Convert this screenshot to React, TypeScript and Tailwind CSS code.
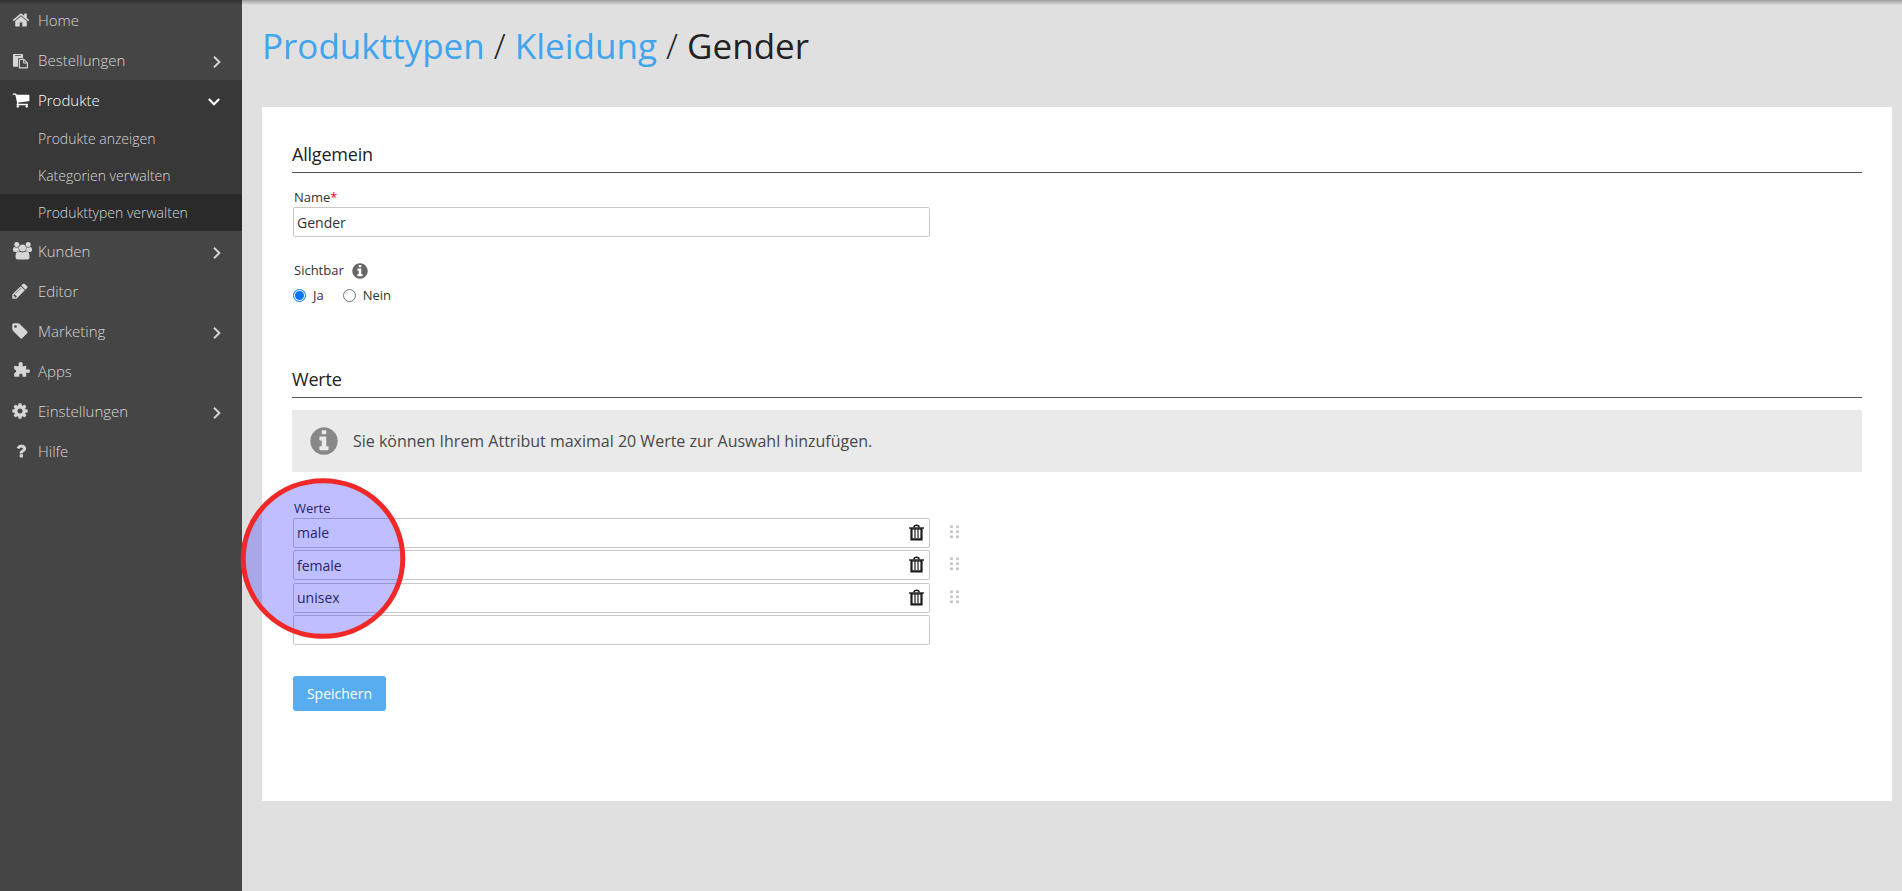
import type { ReactNode } from 'react';

const PATHS = {
  home: 'M1472 992v480q0 26-19 45t-45 19h-384v-384h-256v384h-384q-26 0-45-19t-19-45v-480q0-1 .5-3t.5-3l575-474 575 474q1 2 1 6zm223-69l-62 74q-8 9-21 11h-3q-13 0-21-7l-692-577-692 577q-12 8-24 7-13-2-21-11l-62-74q-8-10-7-23.5t11-21.5l719-599q32-26 76-26t76 26l244 204v-195q0-14 9-23t23-9h192q14 0 23 9t9 23v408l219 182q10 8 11 21.5t-7 23.5z',
  cart: 'M704 1536q0 52-38 90t-90 38-90-38-38-90 38-90 90-38 90 38 38 90zm896 0q0 52-38 90t-90 38-90-38-38-90 38-90 90-38 90 38 38 90zm128-1088v512q0 24-16.5 42.5t-40.5 21.5l-1044 122q13 60 13 70 0 16-24 64h920q26 0 45 19t19 45-19 45-45 19h-1024q-26 0-45-19t-19-45q0-11 8-31.5t16-36 21.5-40 15.5-29.5l-177-823h-204q-26 0-45-19t-19-45 19-45 45-19h256q16 0 28.5 6.5t19.5 15.5 13 24.5 8 26 5.5 29.5 4.5 26h1201q26 0 45 19t19 45z',
  pencil: 'M491 1536l91-91-235-235-91 91v107h128v128h107zm523-928q0-22-22-22-10 0-17 7l-542 542q-7 7-7 17 0 22 22 22 10 0 17-7l542-542q7-7 7-17zm-54-192l416 416-832 832h-416v-416zm683 96q0 53-37 90l-166 166-416-416 166-165q36-38 90-38 53 0 91 38l235 234q37 39 37 91z',
  tag: 'M576 448q0-53-37.5-90.5t-90.5-37.5-90.5 37.5-37.5 90.5 37.5 90.5 90.5 37.5 90.5-37.5 37.5-90.5zm1067 576q0 53-37 90l-491 492q-39 37-91 37-53 0-90-37l-715-716q-38-37-64.5-101t-26.5-117v-416q0-52 38-90t90-38h416q53 0 117 26.5t102 64.5l715 714q37 39 37 91z',
  cog: 'M1152 896q0-106-75-181t-181-75-181 75-75 181 75 181 181 75 181-75 75-181zm512-109v222q0 12-8 23t-20 13l-185 28q-19 54-39 91 35 50 107 138 10 12 10 25t-9 23q-27 37-99 108t-94 71q-12 0-26-9l-138-108q-44 23-91 38-16 136-29 186-7 28-36 28h-222q-14 0-24.5-8.5t-11.5-21.5l-28-184q-49-16-90-37l-141 107q-10 9-25 9-14 0-25-11-126-114-165-168-7-10-7-23 0-12 8-23 15-21 51-66.5t54-70.5q-27-50-41-99l-183-27q-13-2-21-12.5t-8-23.5v-222q0-12 8-23t19-13l186-28q14-46 39-92-40-57-107-138-10-12-10-24 0-10 9-23 26-36 98.5-107.5t94.5-71.5q13 0 26 10l138 107q44-23 91-38 16-136 29-186 7-28 36-28h222q14 0 24.5 8.5t11.5 21.5l28 184q49 16 90 37l142-107q9-9 24-9 13 0 25 10 129 119 165 170 7 8 7 22 0 12-8 23-15 21-51 66.5t-54 70.5q26 50 41 98l183 28q13 2 21 12.5t8 23.5z',
  question: 'M1088 1256v240q0 16-12 28t-28 12h-240q-16 0-28-12t-12-28v-240q0-16 12-28t28-12h240q16 0 28 12t12 28zm316-600q0 54-15.5 101t-35 76.5-55 59.5-57.5 43.5-61 35.5q-41 23-68.5 65t-27.5 67q0 17-12 32.5t-28 15.5h-240q-15 0-25.5-18.5t-10.5-37.5v-45q0-83 65-156.5t143-108.5q59-27 84-56t25-76q0-42-46.5-74t-107.5-32q-65 0-108 29-35 25-107 115-13 16-31 16-12 0-25-8l-164-125q-13-10-15.5-25t5.5-28q160-266 464-266 80 0 161 31t146 83 106 127.5 41 158.5z',
  info: 'M1152 1376v-160q0-14-9-23t-23-9h-96v-512q0-14-9-23t-23-9h-320q-14 0-23 9t-9 23v160q0 14 9 23t23 9h96v320h-96q-14 0-23 9t-9 23v160q0 14 9 23t23 9h448q14 0 23-9t9-23zm-128-896v-160q0-14-9-23t-23-9h-192q-14 0-23 9t-9 23v160q0 14 9 23t23 9h192q14 0 23-9t9-23zm640 416q0 209-103 385.5t-279.5 279.5-385.5 103-385.5-103-279.5-279.5-103-385.5 103-385.5 279.5-279.5 385.5-103 385.5 103 279.5 279.5 103 385.5z',
};

function Glyph({ name, className }: { name: keyof typeof PATHS; className: string }) {
  return (
    <svg viewBox="0 0 1792 1792" fill="currentColor" className={className}>
      <path d={PATHS[name]} />
    </svg>
  );
}

function PasteGlyph() {
  return (
    <svg viewBox="0 0 15 15" fill="currentColor" className="mt-0.5 h-[15px] w-[15px]">
      <path fillRule="evenodd" d="M.8 0h8.400q.8 0 .8.800V3.900H6.200Q5 3.900 5 5.100V12.800H.8Q0 12.800 0 12V.8Q0 0 .8 0zM2.200 1v.8h5.600V1z" />
      <path fillRule="evenodd" d="M6.800 4.700H11L15 8.700V13.700q0 .8-.8.800H6.600q-.8 0-.8-.8V5.500q0-.8 1-.8zM7 5.900V13.300H13.800V9.600H10.900q-.8 0-.8-.8V5.900zM11.200 6.400V8.500H13.300z" />
    </svg>
  );
}

function PuzzleGlyph() {
  return (
    <svg viewBox="0 0 16 15" fill="currentColor" className="-mt-[3px] ml-px h-[15px] w-4">
      <path d="M.3 3.700C1.500 4.100 3.600 4.500 4.400 4 5.200 3.500 4.600 3 4.600 2 4.600.8 5.500 0 6.700 0S8.800.8 8.800 2c0 1-.7 1.500-.3 2.100C8.900 4.700 11 4.100 12.300 3.800 12.200 5.200 11.900 7.200 12.500 7.700 13.100 8.100 13.500 7.200 14.300 7.200 15.400 7.200 16 8.100 16 9.100S15.300 11 14.200 11C13.200 11 12.700 10.300 12.300 10.700 11.900 11.200 12.200 13 12.400 14.600 11 14.800 9.200 14.900 8.600 14.500 8 14 8.600 13.600 8.600 12.900 8.600 12.100 7.800 11.700 7 11.700S5.200 12.100 5.200 12.900C5.200 13.600 5.900 14 5.300 14.500 4.600 15 1.700 14.900.3 14.700.2 13.200 0 11.600.5 10.900 1 10.300 1.500 10.500 1.900 9.900 2.300 9.300 2.200 8.600 1.800 8.200 1.400 7.800.8 7.800.5 7.200 0 6.500.1 5 .3 3.700z" />
    </svg>
  );
}

function UsersGlyph() {
  return (
    <svg viewBox="0 0 19 18" fill="currentColor" className="h-[18px] w-[19px]">
      <circle cx="3.800" cy="2.600" r="2.500" />
      <circle cx="15.200" cy="2.600" r="2.500" />
      <path d="M0 8.200C0 6 .6 4.900 1.600 4.900c1.100.9 2.900.9 4 .2-.2 1.500.1 2.500.7 3.600-1 .1-1.900.5-2.600 1.200H1.900C.8 9.900 0 9.300 0 8.200z" />
      <path d="M19 8.200c0-2.200-.6-3.300-1.600-3.300-1.100.9-2.900.9-4 .2.2 1.500-.1 2.500-.7 3.600 1 .1 1.900.5 2.600 1.200h1.800c1.100 0 1.900-.6 1.900-1.700z" />
      <circle cx="9.500" cy="6" r="3.500" />
      <path d="M2.500 14.900c0-3 .9-5.600 3.200-5.600 2.200 1.500 5.400 1.500 7.600 0 2.300 0 3.200 2.600 3.200 5.600 0 1.700-1.100 2.700-2.700 2.700H5.200c-1.600 0-2.700-1-2.700-2.700z" />
    </svg>
  );
}

function Chevron({ open }: { open?: boolean }) {
  return open ? (
    <svg viewBox="0 0 12 8" className="mt-[3px] mr-[22px] h-2 w-3" fill="none" stroke="currentColor" strokeWidth="2.1">
      <path d="M.8 1 6 6.200 11.200 1" />
    </svg>
  ) : (
    <svg viewBox="0 0 8 12" className="mt-1 mr-[21px] h-3 w-2" fill="none" stroke="currentColor" strokeWidth="1.900">
      <path d="M1 .8 6.400 6 1 11.200" />
    </svg>
  );
}

function NavItem({ icon, label, arrow, open }: { icon: ReactNode; label: string; arrow?: boolean; open?: boolean }) {
  return (
    <div className={`flex h-10 items-center pl-[13px] ${open ? 'text-white' : 'text-[#d6d6d6]'}`}>
      <span className="flex w-[25px] items-center">{icon}</span>
      <span className="flex-1 pt-px text-[15px] font-light">{label}</span>
      {(arrow || open) && <Chevron open={open} />}
    </div>
  );
}

function SubItem({ label, active }: { label: string; active?: boolean }) {
  return (
    <div className={`flex h-[37px] items-center pl-[38px] text-[14px] font-light text-[#d6d6d6] ${active ? 'bg-[#2a2a2a]' : ''}`}>
      {label}
    </div>
  );
}

function Trash() {
  return (
    <svg viewBox="0 0 15 17" className="-mt-0.5 h-[17px] w-[15px]" fill="none" stroke="#1b1b1b">
      <path d="M4.800 3.500C4.800.4 10.200.4 10.200 3.500" strokeWidth="1.400" />
      <path d="M0 4h15" strokeWidth="1.400" />
      <path d="M2.500 4v11.300h10V4" strokeWidth="2.200" />
      <path d="M6 5v9M9 5v9" strokeWidth="1.200" />
      <path d="M2 5h11" strokeWidth="1.200" />
    </svg>
  );
}

function Grip() {
  return (
    <svg viewBox="0 0 9 14" className="h-[14px] w-[9px]" fill="#c3bfbf">
      {[0.5, 5.5, 10.5].map((y) => (
        <g key={y}>
          <rect x="0.200" y={y} width="2.600" height="2.600" />
          <rect x="6.200" y={y} width="2.600" height="2.600" />
        </g>
      ))}
    </svg>
  );
}

function ValueRow({ value, className }: { value?: string; className: string }) {
  return (
    <div className={`flex items-center ${className}`}>
      <div className="flex h-[30px] w-[637px] items-center justify-between rounded-xs border border-[#c8c8c8] bg-white pr-[5px] pl-[3px] text-[14px]">
        <span className={value === 'female' ? 'mt-px' : '-mt-px'}>{value}</span>
        {value && <Trash />}
      </div>
      {value && (
        <div className="-mt-[3px] ml-5">
          <Grip />
        </div>
      )}
    </div>
  );
}

export default function App() {
  return (
    <div className="relative flex h-[891px] w-[1902px] overflow-hidden bg-[#e0e0e0] font-['Open_Sans',sans-serif] text-[#333]">
      <nav className="w-[242px] shrink-0 bg-[#454545]">
        <NavItem icon={<Glyph name="home" className="-ml-px h-[18px] w-[18px]" />} label="Home" />
        <NavItem icon={<PasteGlyph />} label="Bestellungen" arrow />
        <div className="bg-[#383838]">
          <NavItem icon={<Glyph name="cart" className="-ml-px h-[18px] w-[18px]" />} label="Produkte" open />
          <SubItem label="Produkte anzeigen" />
          <SubItem label="Kategorien verwalten" />
          <SubItem label="Produkttypen verwalten" active />
        </div>
        <NavItem icon={<UsersGlyph />} label="Kunden" arrow />
        <NavItem icon={<Glyph name="pencil" className="-ml-0.5 h-[18px] w-[18px]" />} label="Editor" />
        <NavItem icon={<Glyph name="tag" className="-ml-0.5 h-[18px] w-[18px]" />} label="Marketing" arrow />
        <NavItem icon={<PuzzleGlyph />} label="Apps" />
        <NavItem icon={<Glyph name="cog" className="-ml-0.5 h-[18px] w-[18px]" />} label="Einstellungen" arrow />
        <NavItem icon={<Glyph name="question" className="-ml-px h-[18px] w-[18px]" />} label="Hilfe" />
      </nav>

      <main className="flex flex-1 flex-col pr-[10px] pl-5">
        <h1 className="h-[107px] pt-[22px] text-[35px] leading-[48px] whitespace-nowrap text-[#222]">
          <span className="text-[#41a4ef]">Produkttypen</span>
          <span className="font-light"> / </span>
          <span className="text-[#41a4ef]">Kleidung</span>
          <span className="font-light"> / </span>
          Gender
        </h1>

        <section className="h-[694px] bg-white px-[30px] pt-[34px]">
          <h2 className="h-[32px] border-b border-[#555] text-[18px] leading-[26px] tracking-[-0.2px] text-[#222]">Allgemein</h2>

          <div className="pl-px">
            <div className="mt-[15px] h-[19px] pl-px text-[13px] leading-[18px]">
              Name<span className="text-[#f00]">*</span>
            </div>
            <div className="flex h-[30px] w-[637px] items-center rounded-xs border border-[#c8c8c8] pl-[3px] text-[14px]">Gender</div>

            <div className="mt-[25px] flex h-[18px] items-center pl-px text-[13px]">
              Sichtbar
              <Glyph name="info" className="ml-[7px] h-[18px] w-[18px] text-[#666]" />
            </div>
            <div className="mt-[6px] flex h-[18px] items-center text-[13px]">
              <span className="mr-[7px] flex h-[13px] w-[13px] items-center justify-center rounded-full border border-[#0075ff]">
                <span className="h-[9px] w-[9px] rounded-full bg-[#0075ff]" />
              </span>
              <span className="pt-px">Ja</span>
              <span className="mr-[7px] ml-[19px] h-[13px] w-[13px] rounded-full border border-[#767676]" />
              <span className="pt-px">Nein</span>
            </div>
          </div>

          <h2 className="mt-[62px] h-[32px] border-b border-[#555] text-[18px] leading-[26px] tracking-[-0.2px] text-[#222]">Werte</h2>

          <div className="mt-3 flex h-[62px] items-center bg-[#eaeaea] pl-4 text-[16px] text-[#484848]">
            <Glyph name="info" className="h-8 w-8 text-[#888]" />
            <span className="ml-[13px]">Sie können Ihrem Attribut maximal 20 Werte zur Auswahl hinzufügen.</span>
          </div>

          <div className="pl-px">
            <div className="mt-[27px] h-[19px] pl-px text-[13px] leading-[18px]">Werte</div>
            <ValueRow value="male" className="" />
            <ValueRow value="female" className="mt-0.5" />
            <ValueRow value="unisex" className="mt-[3px]" />
            <ValueRow className="mt-0.5" />
            <button className="mt-[31px] flex h-[35px] w-[93px] items-center justify-center rounded-[3px] bg-[#57adef] text-[14px] font-medium text-white">
              Speichern
            </button>
          </div>
        </section>
      </main>

      <div className="absolute inset-x-0 top-0 h-[5px] bg-linear-to-b from-black/30 to-transparent" />
      <svg viewBox="0 0 166 162" className="absolute top-[478px] left-[240px] h-[162px] w-[166px]">
        <ellipse cx="83" cy="80.500" rx="79.800" ry="77.800" fill="#0000ff" fillOpacity=".25" stroke="#f02828" strokeWidth="5" />
      </svg>
    </div>
  );
}
